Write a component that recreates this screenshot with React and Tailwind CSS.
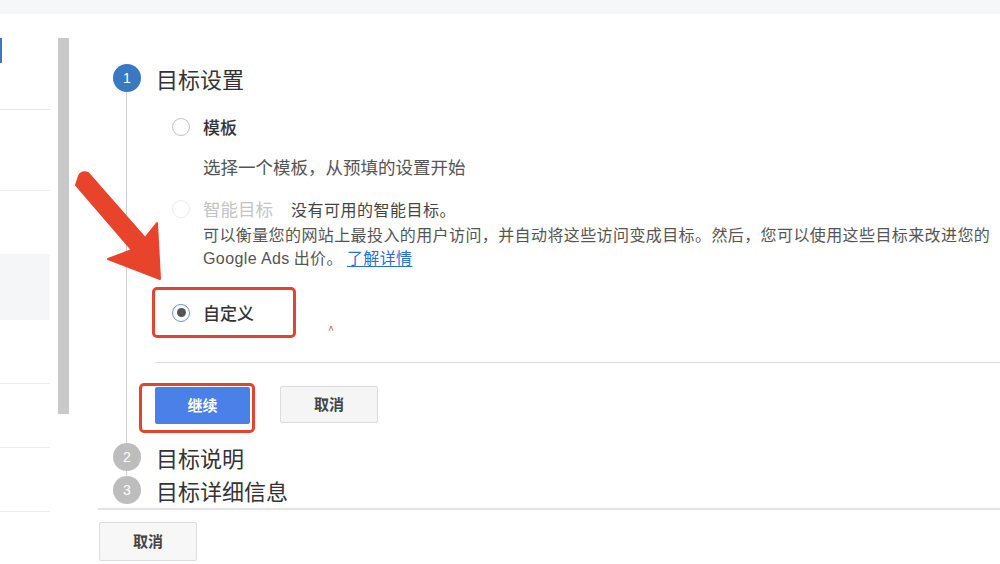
import React from "react";

const font = { fontFamily: '"Noto Sans CJK SC", "Noto Sans", sans-serif' };

function SideItem({ h, border = true, bg = "", children }) {
  return (
    <div className={`relative ${h} ${bg} ${border ? "border-b border-[#e6e6e6]" : ""}`}>{children}</div>
  );
}

export default function App() {
  return (
    <div
      className="relative w-[1000px] h-[564px] overflow-hidden bg-white flex flex-col"
      style={font}
    >
      <div className="h-[14px] shrink-0 bg-[#f6f7f9]" />
      <div className="flex flex-1">
        {/* sidebar */}
        <div className="w-[50px] shrink-0 flex flex-col">
          <SideItem h="h-[96px]">
            <div className="absolute left-0 top-[24px] w-[2px] h-[25px] bg-[#3b78c4]" />
          </SideItem>
          <div className="h-[81px] border-b border-[#f0f0f0]" />
          <div className="h-[63px]" />
          <div className="h-[66px] bg-[#f5f6f8]" />
          <div className="h-[64px] border-b border-[#ececec]" />
          <div className="h-[64px] border-b border-[#ececec]" />
          <div className="h-[64px] border-b border-[#ececec]" />
        </div>
        {/* scrollbar */}
        <div className="ml-[8px] mt-[24px] w-[11px] h-[376px] bg-[#c9c9c9] shrink-0" />
        {/* main */}
        <div className="ml-[29px] flex-1 flex flex-col">
          <div className="pl-[15px] pt-[50px]">
            {/* step 1 */}
            <div className="flex items-center h-[28px]">
              <div className="w-[28px] h-[28px] rounded-full bg-[#3b78c4] text-white text-[14px] flex items-center justify-center" style={{ fontFamily: '"Liberation Sans", sans-serif' }}>
                1
              </div>
              <div className="ml-[15px] text-[22px] leading-[28px] text-[#333]">目标设置</div>
            </div>
            {/* step 1 body */}
            <div className="ml-[13px] border-l border-[#cfcfcf] pl-[45px] pt-[24px] pb-[19px]">
              <div className="flex items-center h-[22px]">
                <div className="w-[18px] h-[18px] rounded-full border-[1.5px] border-[#c4c4c4] bg-white" />
                <div className="ml-[13px] text-[17px] font-medium text-[#333]">模板</div>
              </div>
              <div className="mt-[18px] pl-[31px] text-[17.5px] leading-[22px] text-[#555]">
                选择一个模板，从预填的设置开始
              </div>
              <div className="mt-[20px] flex items-center h-[22px]">
                <div className="w-[18px] h-[18px] rounded-full border-[1.5px] border-[#ededed] bg-white" />
                <div className="ml-[13px] text-[17.5px] text-[#c4c4c4]">智能目标</div>
                <div className="ml-[18px] text-[16px] tracking-[0.5px] text-[#444]">没有可用的智能目标。</div>
              </div>
              <div className="mt-[3px] pl-[31px] text-[16px] leading-[23px] tracking-[0.4px] text-[#555] whitespace-nowrap">
                <div>可以衡量您的网站上最投入的用户访问，并自动将这些访问变成目标。然后，您可以使用这些目标来改进您的</div>
                <div>
                  <span style={{ fontFamily: '"Liberation Sans", "Noto Sans CJK SC", sans-serif' }}>Google Ads</span> 出价。
                  <span className="ml-[4px] text-[#2a6fd8] underline underline-offset-2">了解详情</span>
                </div>
              </div>
              {/* custom selected */}
              <div className="relative mt-[17px] ml-[-20px] w-[144px] h-[51px] border-[3px] border-[#e2452f] rounded-[5px] flex items-center pl-[17px]">
                <div className="w-[18px] h-[18px] rounded-full border-[1.5px] border-[#6a93dc] flex items-center justify-center">
                  <div className="w-[9px] h-[9px] rounded-full bg-[#555]" />
                </div>
                <div className="ml-[13px] text-[17px] font-medium text-[#333]">自定义</div>
                <div className="absolute left-[173px] top-[34px] text-[11px] leading-none text-[#e2452f]">^</div>
              </div>
              <div className="mt-[24px] ml-[-17px] border-t border-[#e0e0e0]" />
              <div className="mt-[24px] ml-[-17px] flex items-start">
                <div className="relative">
                  <div className="absolute left-[-16px] top-[-4px] w-[116px] h-[50px] border-[3px] border-[#e2452f] rounded-[5px]" />
                  <div className="w-[95px] h-[37px] bg-[#4a80e8] rounded-[2px] flex items-center justify-center text-white text-[15px] font-bold">
                    继续
                  </div>
                </div>
                <div className="ml-[30px] mt-[-1px] w-[98px] h-[37px] bg-[#f5f5f5] border border-[#dcdcdc] rounded-[2px] flex items-center justify-center text-[#444] text-[15px] font-bold">
                  取消
                </div>
              </div>
            </div>
            {/* step 2 */}
            <div className="flex items-center h-[28px]">
              <div className="w-[28px] h-[28px] rounded-full bg-[#bdbdbd] text-white text-[14px] flex items-center justify-center" style={{ fontFamily: '"Liberation Sans", sans-serif' }}>
                2
              </div>
              <div className="ml-[15px] text-[22px] leading-[28px] text-[#333]">目标说明</div>
            </div>
            <div className="ml-[13px] h-[5px] border-l border-[#cfcfcf]" />
            <div className="flex items-center h-[28px]">
              <div className="w-[28px] h-[28px] rounded-full bg-[#bdbdbd] text-white text-[14px] flex items-center justify-center" style={{ fontFamily: '"Liberation Sans", sans-serif' }}>
                3
              </div>
              <div className="ml-[15px] text-[22px] leading-[28px] text-[#333]">目标详细信息</div>
            </div>
          </div>
          <div className="mt-[4px] border-t-2 border-[#e3e3e3]" />
          <div className="mt-[12px] ml-[1px] w-[98px] h-[39px] bg-[#f7f7f7] border border-[#dcdcdc] rounded-[2px] flex items-center justify-center text-[#444] text-[15px] font-bold">
            取消
          </div>
        </div>
      </div>
      {/* annotation arrow */}
      <svg className="absolute left-0 top-0 pointer-events-none" width="1000" height="564" viewBox="0 0 1000 564">
        <path
          d="M78 179 Q80 170 88 173 L145 238 L157 223 L160 279 L108 259 L132 250 L76 185 Z"
          fill="#e8442c"
          stroke="#e8442c"
          strokeWidth="2"
          strokeLinejoin="round"
        />
      </svg>
    </div>
  );
}
